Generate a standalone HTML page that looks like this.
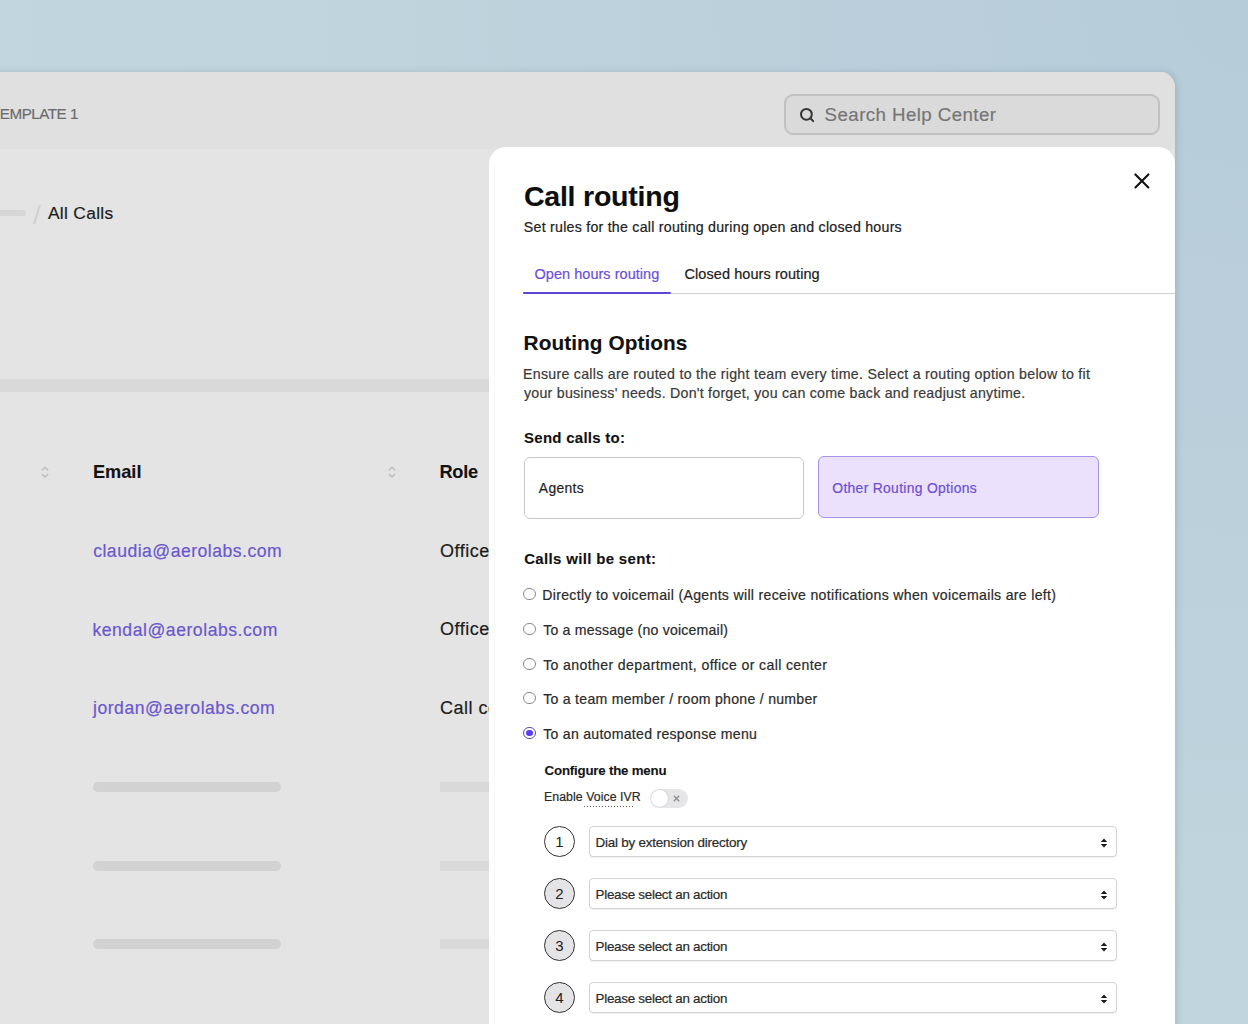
<!DOCTYPE html>
<html><head><meta charset="utf-8"><title>Call routing</title>
<style>
*{margin:0;padding:0;box-sizing:border-box}
html,body{width:1248px;height:1024px;overflow:hidden}
body{position:relative;background:radial-gradient(circle at 100% 0%,#b6ccd9 0px,#bbd0db 500px,#bfd4dd 900px,#c1d6de 1300px);font-family:"Liberation Sans",sans-serif}
.t{position:absolute;white-space:nowrap;-webkit-text-stroke:0.2px currentColor}
#card{position:absolute;left:-40px;top:72px;width:1214.5px;height:1000px;background:#e4e4e4;border-top-right-radius:15px;box-shadow:2px 0 6px rgba(80,100,115,.22)}
#cardhead{position:absolute;left:-40px;top:72px;width:1214.5px;height:77px;background:#e0e0e0;border-top-right-radius:15px}
#search{position:absolute;left:784px;top:94px;width:375.5px;height:41.2px;background:#dadada;border:2px solid #c1c1c1;border-radius:9px}
#band{position:absolute;left:-10px;top:379.3px;width:520px;height:12.6px;background:#d9d9d9}
.bar{position:absolute;background:#d2d2d2;border-radius:5px}
.bar.b2{background:#d9d9d9;border-radius:0}
#panel{position:absolute;left:489px;top:147px;width:685.5px;height:900px;background:#fff;border-radius:17px 17px 0 0}
.box{position:absolute;background:#fff;border:1.3px solid #c9c9c9;border-radius:6px}
.box.other{background:#ebe1fc;border-color:#a592e6}
.radio{position:absolute;width:12.2px;height:12.2px;border-radius:50%;border:1.2px solid #8a8a8a;background:#fff}
.radio.on{border-color:#5a4cb0}
.radio.on i{position:absolute;left:1.8px;top:1.8px;width:6.4px;height:6.4px;border-radius:50%;background:#5b3ff2}
#toggle{position:absolute;left:649.7px;top:788.6px;width:38px;height:19.6px;border-radius:10px;background:#e6e6e9}
#toggle i{position:absolute;left:1px;top:1px;width:17.6px;height:17.6px;border-radius:50%;background:#fff;box-shadow:0 0 2px rgba(0,0,0,.18)}
#toggle span{position:absolute;left:22px;top:2.5px;font-size:11px;line-height:14px;color:#8e8e8e}
.num{position:absolute;width:31px;height:31px;border-radius:50%;border:1.5px solid #333;background:#e4e4e7;font-size:15px;line-height:29.4px;text-align:center;color:#222}
.num.first{background:#fff}
.sel{position:absolute;width:528px;height:31px;border:1.2px solid #d3d3d3;border-radius:4px;background:#fff;box-shadow:0 1px 1px rgba(0,0,0,.06)}
.sel .arr{position:absolute;left:509.5px;top:11px}
</style></head>
<body>

<div id="card"></div>
<div id="cardhead"></div>
<div id="search"></div>
<svg style="position:absolute;left:799px;top:107px" width="17" height="17" viewBox="0 0 17 17"><circle cx="7.4" cy="7.3" r="5.4" fill="none" stroke="#353535" stroke-width="2"/><path d="M11.4 11.3 L14.2 14.1" stroke="#353535" stroke-width="2" stroke-linecap="round"/></svg>
<div class="bar" style="left:-10px;top:209.8px;width:36px;height:6.4px;background:#d6d6d6"></div>
<div style="position:absolute;left:35.6px;top:205px;width:1.5px;height:19px;background:#cfcfcf;transform:skewX(-17deg)"></div>
<div id="band"></div>
<svg style="position:absolute;left:40px;top:466px" width="10" height="13" viewBox="0 0 10 13"><path d="M1.9 4.4 L5 1.3 L8.1 4.4 M1.9 8.0 L5 11.1 L8.1 8.0" fill="none" stroke="#c0c0c0" stroke-width="1.6"/></svg>
<svg style="position:absolute;left:387px;top:466px" width="10" height="13" viewBox="0 0 10 13"><path d="M1.9 4.4 L5 1.3 L8.1 4.4 M1.9 8.0 L5 11.1 L8.1 8.0" fill="none" stroke="#c0c0c0" stroke-width="1.6"/></svg>
<div class="bar" style="left:92.5px;top:782px;width:188px;height:10px"></div>
<div class="bar" style="left:92.5px;top:860.5px;width:188px;height:10px"></div>
<div class="bar" style="left:92.5px;top:939px;width:188px;height:10px"></div>
<div class="bar b2" style="left:439.5px;top:782px;width:60px;height:10px"></div>
<div class="bar b2" style="left:439.5px;top:860.5px;width:60px;height:10px"></div>
<div class="bar b2" style="left:439.5px;top:939px;width:60px;height:10px"></div>

<div class="t" style="left:-0.20px;top:105.21px;font-size:15.2px;line-height:18.24px;font-weight:400;color:#6b6b6b;letter-spacing:-0.473px">EMPLATE 1</div><div class="t" style="left:47.90px;top:203.13px;font-size:17.4px;line-height:20.88px;font-weight:400;color:#1c1c1c;letter-spacing:0.31px">All Calls</div><div class="t" style="left:92.90px;top:461.97px;font-size:18.2px;line-height:21.84px;font-weight:700;color:#121212;letter-spacing:0.007px;-webkit-text-stroke:0.1px currentColor">Email</div><div class="t" style="left:439.40px;top:461.97px;font-size:18.2px;line-height:21.84px;font-weight:700;color:#121212;letter-spacing:-0.232px;-webkit-text-stroke:0.1px currentColor">Role</div><div class="t" style="left:93.20px;top:541.34px;font-size:17.6px;line-height:21.12px;font-weight:400;color:#6a58cc;letter-spacing:0.486px">claudia@aerolabs.com</div><div class="t" style="left:92.40px;top:619.94px;font-size:17.6px;line-height:21.12px;font-weight:400;color:#6a58cc;letter-spacing:0.535px">kendal@aerolabs.com</div><div class="t" style="left:93.00px;top:697.94px;font-size:17.6px;line-height:21.12px;font-weight:400;color:#6a58cc;letter-spacing:0.515px">jordan@aerolabs.com</div><div class="t" style="left:440.00px;top:540.96px;font-size:18px;line-height:21.6px;font-weight:400;color:#1c1c1c;letter-spacing:0.5px">Office</div><div class="t" style="left:440.00px;top:619.36px;font-size:18px;line-height:21.6px;font-weight:400;color:#1c1c1c;letter-spacing:0.5px">Office</div><div class="t" style="left:440.00px;top:697.56px;font-size:18px;line-height:21.6px;font-weight:400;color:#1c1c1c;letter-spacing:0.5px">Call center</div><div class="t" style="left:824.60px;top:103.80px;font-size:18.7px;line-height:22.44px;font-weight:400;color:#767676;letter-spacing:0.43px">Search Help Center</div>

<div id="panel"></div>
<svg style="position:absolute;left:1132px;top:171px" width="20" height="20" viewBox="0 0 20 20"><path d="M3.4 3.4 L16.4 16.4 M16.4 3.4 L3.4 16.4" stroke="#111" stroke-width="2.1" stroke-linecap="round"/></svg>
<div style="position:absolute;left:523px;top:292.8px;width:652px;height:1px;background:#cfcfcf"></div>
<div style="position:absolute;left:494px;top:160px;width:1px;height:870px;background:#f9f9f9"></div>
<div style="position:absolute;left:523px;top:291.6px;width:147.5px;height:2.3px;background:#5f45d6;border-radius:1px"></div>
<div class="box" style="left:523.5px;top:456.5px;width:280px;height:62px"></div>
<div class="box other" style="left:818.2px;top:456.2px;width:280.5px;height:62px"></div>
<div class="radio" style="left:523.4px;top:588.2px"></div><div class="radio" style="left:523.4px;top:623.0px"></div><div class="radio" style="left:523.4px;top:657.7px"></div><div class="radio" style="left:523.4px;top:692.3px"></div><div class="radio on" style="left:523.4px;top:726.9px"><i></i></div>
<div style="position:absolute;left:584px;top:806px;width:51px;height:1.2px;background:repeating-linear-gradient(90deg,#5a5a5a 0,#5a5a5a 1.4px,transparent 1.4px,transparent 3px)"></div>
<div id="toggle"><i></i><svg style="position:absolute;left:23.5px;top:6.3px" width="7" height="7" viewBox="0 0 7 7"><path d="M0.8 0.8 L6.2 6.2 M6.2 0.8 L0.8 6.2" stroke="#8e8e8e" stroke-width="1.3"/></svg></div>
<div class="num first" style="left:544px;top:825.8px">1</div><div class="sel" style="left:589.4px;top:826.0px"><svg class="arr" width="8" height="10" viewBox="0 0 8 10"><path d="M4 0.6 L7.2 4 L0.8 4 Z M4 9.4 L7.2 6 L0.8 6 Z" fill="#1a1a1a"/></svg></div><div class="num" style="left:544px;top:877.8px">2</div><div class="sel" style="left:589.4px;top:878.0px"><svg class="arr" width="8" height="10" viewBox="0 0 8 10"><path d="M4 0.6 L7.2 4 L0.8 4 Z M4 9.4 L7.2 6 L0.8 6 Z" fill="#1a1a1a"/></svg></div><div class="num" style="left:544px;top:929.8px">3</div><div class="sel" style="left:589.4px;top:930.0px"><svg class="arr" width="8" height="10" viewBox="0 0 8 10"><path d="M4 0.6 L7.2 4 L0.8 4 Z M4 9.4 L7.2 6 L0.8 6 Z" fill="#1a1a1a"/></svg></div><div class="num" style="left:544px;top:981.8px">4</div><div class="sel" style="left:589.4px;top:982.0px"><svg class="arr" width="8" height="10" viewBox="0 0 8 10"><path d="M4 0.6 L7.2 4 L0.8 4 Z M4 9.4 L7.2 6 L0.8 6 Z" fill="#1a1a1a"/></svg></div>

<div class="t" style="left:523.90px;top:178.62px;font-size:28.5px;line-height:34.2px;font-weight:700;color:#0e0e0e;letter-spacing:-0.21px;-webkit-text-stroke:0.1px currentColor">Call routing</div><div class="t" style="left:523.80px;top:218.76px;font-size:14.2px;line-height:17.04px;font-weight:400;color:#202020;letter-spacing:0.247px">Set rules for the call routing during open and closed hours</div><div class="t" style="left:534.50px;top:266.08px;font-size:14.5px;line-height:17.4px;font-weight:400;color:#6b4fdc;letter-spacing:0.037px">Open hours routing</div><div class="t" style="left:684.50px;top:266.08px;font-size:14.5px;line-height:17.4px;font-weight:400;color:#202020;letter-spacing:0.072px">Closed hours routing</div><div class="t" style="left:523.60px;top:330.71px;font-size:20.8px;line-height:24.96px;font-weight:700;color:#111111;letter-spacing:0.064px;-webkit-text-stroke:0.1px currentColor">Routing Options</div><div class="t" style="left:523.00px;top:365.56px;font-size:14.2px;line-height:17.04px;font-weight:400;color:#3a3a3a;letter-spacing:0.274px">Ensure calls are routed to the right team every time. Select a routing option below to fit</div><div class="t" style="left:524.00px;top:385.16px;font-size:14.2px;line-height:17.04px;font-weight:400;color:#3a3a3a;letter-spacing:0.241px">your business' needs. Don't forget, you can come back and readjust anytime.</div><div class="t" style="left:524.00px;top:428.80px;font-size:15px;line-height:18.0px;font-weight:700;color:#111111;letter-spacing:0.267px;-webkit-text-stroke:0.1px currentColor">Send calls to:</div><div class="t" style="left:538.80px;top:479.64px;font-size:13.9px;line-height:16.68px;font-weight:400;color:#1e1e1e;letter-spacing:0.34px">Agents</div><div class="t" style="left:832.30px;top:479.64px;font-size:13.9px;line-height:16.68px;font-weight:400;color:#6b4fd0;letter-spacing:0.307px">Other Routing Options</div><div class="t" style="left:524.20px;top:549.80px;font-size:15px;line-height:18.0px;font-weight:700;color:#111111;letter-spacing:0.329px;-webkit-text-stroke:0.1px currentColor">Calls will be sent:</div><div class="t" style="left:542.20px;top:586.85px;font-size:14.1px;line-height:16.92px;font-weight:400;color:#2a2a2a;letter-spacing:0.319px">Directly to voicemail (Agents will receive notifications when voicemails are left)</div><div class="t" style="left:543.20px;top:621.85px;font-size:14.1px;line-height:16.92px;font-weight:400;color:#2a2a2a;letter-spacing:0.208px">To a message (no voicemail)</div><div class="t" style="left:543.20px;top:656.55px;font-size:14.1px;line-height:16.92px;font-weight:400;color:#2a2a2a;letter-spacing:0.375px">To another department, office or call center</div><div class="t" style="left:543.20px;top:691.15px;font-size:14.1px;line-height:16.92px;font-weight:400;color:#2a2a2a;letter-spacing:0.273px">To a team member / room phone / number</div><div class="t" style="left:543.20px;top:725.75px;font-size:14.1px;line-height:16.92px;font-weight:400;color:#2a2a2a;letter-spacing:0.271px">To an automated response menu</div><div class="t" style="left:544.60px;top:763.41px;font-size:13.3px;line-height:15.96px;font-weight:700;color:#151515;letter-spacing:-0.215px;-webkit-text-stroke:0.1px currentColor">Configure the menu</div><div class="t" style="left:544.00px;top:790.36px;font-size:12.3px;line-height:14.76px;font-weight:400;color:#2a2a2a;letter-spacing:0.065px">Enable Voice IVR</div><div class="t" style="left:595.50px;top:834.92px;font-size:13.4px;line-height:16.08px;font-weight:400;color:#2a2a2a;letter-spacing:-0.206px">Dial by extension directory</div><div class="t" style="left:595.50px;top:886.92px;font-size:13.4px;line-height:16.08px;font-weight:400;color:#2a2a2a;letter-spacing:-0.262px">Please select an action</div><div class="t" style="left:595.50px;top:938.92px;font-size:13.4px;line-height:16.08px;font-weight:400;color:#2a2a2a;letter-spacing:-0.262px">Please select an action</div><div class="t" style="left:595.50px;top:990.92px;font-size:13.4px;line-height:16.08px;font-weight:400;color:#2a2a2a;letter-spacing:-0.262px">Please select an action</div>
</body></html>
